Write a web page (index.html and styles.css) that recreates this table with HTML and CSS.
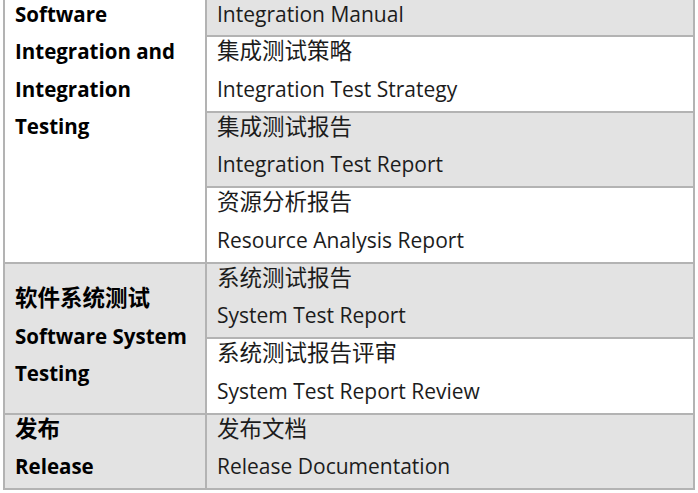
FILE: index.html
```html
<!DOCTYPE html>
<html lang="zh-CN">
<head>
<meta charset="utf-8">
<link rel="stylesheet" href="styles.css">
</head>
<body>
<table class="grid">
  <tr class="row-first gray">
    <td class="phase white" rowspan="4"><div class="phase-top">Software<br>Integration and<br>Integration<br>Testing</div></td>
    <td class="doc doc-first"><div class="lift-first">Integration Manual</div></td>
  </tr>
  <tr class="white">
    <td class="doc"><div class="lift"><div class="zh">集成测试策略</div><div class="en">Integration Test Strategy</div></div></td>
  </tr>
  <tr class="gray">
    <td class="doc"><div class="lift"><div class="zh">集成测试报告</div><div class="en">Integration Test Report</div></div></td>
  </tr>
  <tr class="white">
    <td class="doc"><div class="lift"><div class="zh">资源分析报告</div><div class="en">Resource Analysis Report</div></div></td>
  </tr>
  <tr class="gray">
    <td class="phase" rowspan="2"><div class="lift"><div class="zh">软件系统测试</div><div class="en">Software System</div><div class="en">Testing</div></div></td>
    <td class="doc"><div class="lift"><div class="zh">系统测试报告</div><div class="en">System Test Report</div></div></td>
  </tr>
  <tr class="white">
    <td class="doc"><div class="lift"><div class="zh">系统测试报告评审</div><div class="en">System Test Report Review</div></div></td>
  </tr>
  <tr class="gray">
    <td class="phase phase-last"><div class="lift"><div class="zh">发布</div><div class="en">Release</div></div></td>
    <td class="doc"><div class="lift"><div class="zh">发布文档</div><div class="en">Release Documentation</div></div></td>
  </tr>
</table>
</body>
</html>
```
FILE: styles.css
```css
html, body {
  margin: 0;
  padding: 0;
  background: #ffffff;
  overflow: hidden;
}
.grid {
  margin-left: 3px;
  width: 692px;
  border-collapse: separate;
  border-spacing: 0;
  border-left: 2px solid #b3b3b3;
  border-right: 2px solid #b3b3b3;
  table-layout: fixed;
  font-family: "Open Sans", "Noto Sans CJK SC", sans-serif;
  font-size: 21px;
  line-height: 36.75px;
  color: #1c1c1c;
}
.zh {
  font-family: "Noto Sans CJK SC", sans-serif;
  font-size: 22.5px;
  line-height: 34.75px;
  margin-bottom: 4px;
}
.en { line-height: 36.75px; }
.grid td {
  padding: 0 10px;
  border-bottom: 2px solid #b3b3b3;
  box-sizing: border-box;
  height: 75.5px;
}
.grid tr.row-first td.doc-first { height: 37px; }
.gray td { background: #e3e3e3; }
.white td { background: #ffffff; }
td.white { background: #ffffff; }
.phase {
  width: 202px;
  border-right: 2px solid #b3b3b3;
  font-weight: 700;
  font-size: 20.5px;
  color: #000;
  vertical-align: middle;
}
.phase-top { margin-top: -4px; line-height: 37.3px; }
td.phase.white { vertical-align: top; }
.phase-last { vertical-align: top; }
.doc {
  padding-left: 12px;
  vertical-align: top;
}
.lift { margin-top: -5px; }
.lift-first {
  line-height: 33px;
  margin-top: -2px;
}
```
